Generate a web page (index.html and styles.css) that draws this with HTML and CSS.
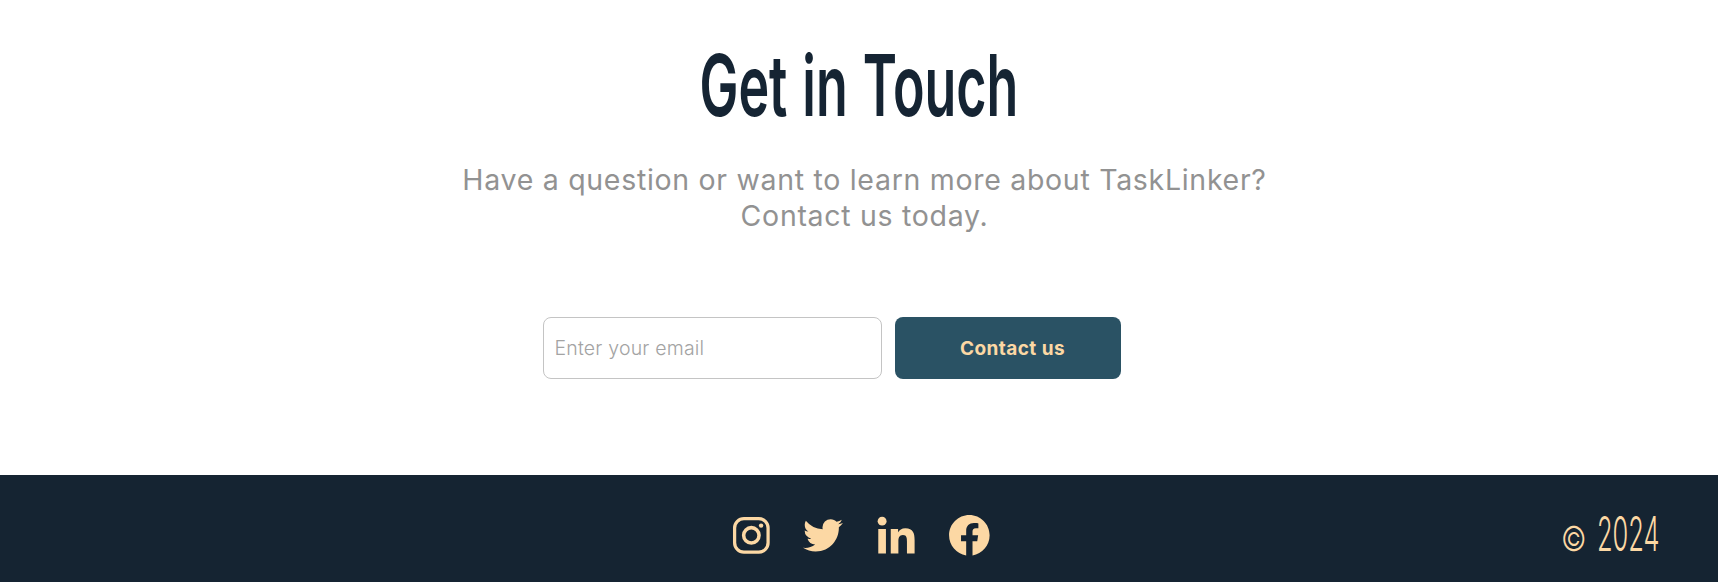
FILE: index.html
```html
<!DOCTYPE html>
<html lang="en">
<head>
<meta charset="utf-8">
<title>TaskLinker</title>
<link rel="stylesheet" href="styles.css">
</head>
<body>
<main class="contact">
  <h1 class="title"><span class="title-text">Get in Touch</span></h1>
  <p class="lead"><span class="lead-first">Have a question or want to learn more about TaskLinker?</span><br><span class="lead-second">Contact us today.</span></p>
  <form class="form">
    <input class="email" type="email" placeholder="Enter your email">
    <button class="submit" type="button">Contact us</button>
  </form>
</main>
<footer class="footer">
  <nav class="social">
    <svg class="icon" viewBox="0 0 24 24"><rect x="3.75" y="3.75" width="16.5" height="16.5" rx="4.6" fill="none" stroke="currentColor" stroke-width="1.6"/><circle cx="12" cy="12" r="3.8" fill="none" stroke="currentColor" stroke-width="1.75"/><circle cx="16.8" cy="7.2" r="1.08"/></svg>
    <svg class="icon" viewBox="0 0 24 24"><path d="M19.633 7.997c.013.175.013.349.013.523 0 5.325-4.053 11.461-11.46 11.461-2.282 0-4.402-.661-6.186-1.809.324.037.636.05.973.05a8.07 8.07 0 0 0 5.001-1.721 4.036 4.036 0 0 1-3.767-2.793c.249.037.499.062.761.062.361 0 .724-.05 1.061-.137a4.027 4.027 0 0 1-3.23-3.953v-.05c.537.299 1.16.486 1.82.511a4.022 4.022 0 0 1-1.796-3.354c0-.748.199-1.434.548-2.032a11.457 11.457 0 0 0 8.306 4.215c-.062-.3-.1-.611-.1-.923a4.026 4.026 0 0 1 4.028-4.028c1.16 0 2.207.486 2.943 1.272a7.957 7.957 0 0 0 2.556-.973 4.02 4.02 0 0 1-1.771 2.22 8.073 8.073 0 0 0 2.319-.624 8.645 8.645 0 0 1-2.019 2.083z"/></svg>
    <svg class="icon" viewBox="0 0 24 24"><circle cx="4.983" cy="5.009" r="2.188"/><path d="M9.237 8.855v12.139h3.769v-6.003c0-1.584.298-3.118 2.262-3.118 1.937 0 1.961 1.811 1.961 3.218v5.904H21v-6.657c0-3.27-.704-5.783-4.526-5.783-1.835 0-3.065 1.007-3.568 1.96h-.051v-1.66H9.237zm-6.142 0H6.87v12.139H3.095z"/></svg>
    <svg class="icon" viewBox="0 0 24 24"><path d="M12.001 2.002c-5.522 0-9.999 4.477-9.999 9.999 0 4.99 3.656 9.126 8.437 9.879v-6.988h-2.54v-2.891h2.54V9.798c0-2.508 1.493-3.891 3.776-3.891 1.094 0 2.24.195 2.24.195v2.459h-1.264c-1.24 0-1.628.772-1.628 1.563v1.875h2.771l-.443 2.891h-2.328v6.988C18.344 21.129 22 16.992 22 12.001c0-5.522-4.477-9.999-9.999-9.999z"/></svg>
  </nav>
  <p class="copyright"><span class="mark">©</span><span class="year">2024</span></p>
</footer>
</body>
</html>
```
FILE: styles.css
```css
* { box-sizing: border-box; }

body {
  margin: 0;
  height: 582px;
  overflow: hidden;
  display: flex;
  flex-direction: column;
  background: #fff;
  font-family: Inter, "Liberation Sans", sans-serif;
}

.contact {
  height: 475px;
  flex: none;
  display: flex;
  flex-direction: column;
  align-items: center;
}

.title {
  margin: 36px 0 0;
  height: 100px;
  line-height: 100px;
  font-size: 85px;
  font-weight: 600;
  color: #152433;
}

.title-text {
  display: inline-block;
  white-space: nowrap;
  word-spacing: 3px;
  transform: scaleX(.611);
}

.lead {
  margin: 26px 0 0 11px;
  line-height: 36px;
  font-size: 28.5px;
  letter-spacing: .7px;
  color: #929292;
  text-align: center;
  white-space: nowrap;
}

.form {
  display: flex;
  gap: 13px;
  margin: 83px 0 0;
  padding-right: 55px;
}

.email {
  width: 339px;
  height: 61.5px;
  padding: 0 11px;
  border: 1px solid #c4c4c4;
  border-radius: 8px;
  outline: 0;
  font: 300 19.5px Inter, sans-serif;
  letter-spacing: .2px;
}

.email::placeholder { color: #a3a3a3; opacity: 1; }

.submit {
  width: 226px;
  height: 61.5px;
  padding: 1px 0 0 10px;
  border: 0;
  border-radius: 8px;
  background: #2a5264;
  color: #fcd8a4;
  font: 700 19px Inter, sans-serif;
  letter-spacing: .45px;
}

.footer {
  height: 107px;
  flex: none;
  display: grid;
  grid-template-columns: 726.5px 1fr auto;
  padding: 13px 60px 0 0;
  background: #152432;
  color: #fcd8a4;
  align-items: center;
}

.social {
  grid-column: 2;
  display: flex;
  gap: 24px;
}

.icon {
  width: 48.7px;
  height: 48.7px;
  fill: currentColor;
}

.copyright {
  display: flex;
  align-items: baseline;
  gap: 13px;
  margin: 0;
  padding-top: 3px;
  line-height: 50px;
  font-weight: 300;
}

.mark {
  width: 23px;
  font-size: 34px;
  transform: scaleX(.82);
  transform-origin: left;
}

.year {
  width: 61px;
  font-size: 48px;
  transform: scaleX(.53);
  transform-origin: left;
}
```
